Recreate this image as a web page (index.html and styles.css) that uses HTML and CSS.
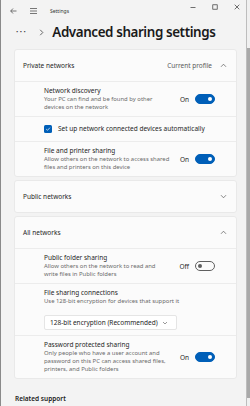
FILE: index.html
```html
<!doctype html>
<html>
	<head>
		<meta charset="utf-8"/>
		<meta name="viewport" content="width=device-width, initial-scale=1" />
		<title>Settings</title>
		<link rel="stylesheet" href="styles.css">
	</head>
	<body>
		<div class="window">
			<div class="main">
				<div class="titlebar">
					<svg class="tb-icon back" width="7" height="6" viewBox="0 0 7 6"><path d="M3 0.5 L0.7 3 L3 5.5 M0.7 3 H6.5" fill="none" stroke="#555" stroke-width="0.8"/></svg>
					<svg class="tb-icon menu" width="7" height="6" viewBox="0 0 7 6"><path d="M0 0.5 H7 M0 3 H7 M0 5.5 H7" fill="none" stroke="#555" stroke-width="0.8"/></svg>
					<span class="app-name">Settings</span>
					<div class="caption">
						<svg width="6" height="6" viewBox="0 0 6 6"><path d="M0.5 3.5 H5.5" stroke="#333" stroke-width="0.7"/></svg>
						<svg width="6" height="6" viewBox="0 0 6 6"><rect x="0.8" y="0.8" width="4.4" height="4.4" fill="none" stroke="#333" stroke-width="0.7"/></svg>
						<svg width="6" height="6" viewBox="0 0 6 6"><path d="M0.7 0.7 L5.3 5.3 M5.3 0.7 L0.7 5.3" stroke="#333" stroke-width="0.7"/></svg>
					</div>
				</div>

				<div class="crumb">
					<span class="dots">&bull;&bull;&bull;</span>
					<svg class="crumb-sep" width="5" height="7" viewBox="0 0 5 7"><path d="M1.2 0.8 L3.8 3.5 L1.2 6.2" fill="none" stroke="#444" stroke-width="0.8"/></svg>
					<h1>Advanced sharing settings</h1>
				</div>

				<div class="content">
					<div class="card">
						<div class="card-head">
							<span>Private networks</span>
							<span class="head-right">Current profile
								<svg class="chev" width="7" height="5" viewBox="0 0 7 5"><path d="M1 3.8 L3.5 1.2 L6 3.8" fill="none" stroke="#555" stroke-width="0.7"/></svg>
							</span>
						</div>
						<div class="row">
							<div class="row-text">
								<div class="row-title">Network discovery</div>
								<div class="row-desc">Your PC can find and be found by other devices on the network</div>
							</div>
							<div class="row-ctrl">On <span class="toggle on"></span></div>
						</div>
						<div class="row check-row">
							<span class="checkbox">
								<svg width="6" height="6" viewBox="0 0 6 6"><path d="M1.2 3.1 L2.5 4.3 L4.9 1.7" fill="none" stroke="#fff" stroke-width="0.7"/></svg>
							</span>
							<span class="row-title">Set up network connected devices automatically</span>
						</div>
						<div class="row">
							<div class="row-text">
								<div class="row-title">File and printer sharing</div>
								<div class="row-desc">Allow others on the network to access shared files and printers on this device</div>
							</div>
							<div class="row-ctrl">On <span class="toggle on"></span></div>
						</div>
					</div>

					<div class="card">
						<div class="card-head">
							<span>Public networks</span>
							<svg class="chev" width="7" height="5" viewBox="0 0 7 5"><path d="M1 1.2 L3.5 3.8 L6 1.2" fill="none" stroke="#555" stroke-width="0.7"/></svg>
						</div>
					</div>

					<div class="card">
						<div class="card-head">
							<span>All networks</span>
							<svg class="chev" width="7" height="5" viewBox="0 0 7 5"><path d="M1 3.8 L3.5 1.2 L6 3.8" fill="none" stroke="#555" stroke-width="0.7"/></svg>
						</div>
						<div class="row">
							<div class="row-text">
								<div class="row-title">Public folder sharing</div>
								<div class="row-desc">Allow others on the network to read and write files in Public folders</div>
							</div>
							<div class="row-ctrl">Off <span class="toggle"></span></div>
						</div>
						<div class="row col-row">
							<div class="row-title">File sharing connections</div>
							<div class="row-desc">Use 128-bit encryption for devices that support it</div>
							<div class="dropdown">
								<span>128-bit encryption (Recommended)</span>
								<svg width="6" height="4" viewBox="0 0 6 4"><path d="M1 1 L3 3 L5 1" fill="none" stroke="#555" stroke-width="0.6"/></svg>
							</div>
						</div>
						<div class="row">
							<div class="row-text">
								<div class="row-title">Password protected sharing</div>
								<div class="row-desc">Only people who have a user account and password on this PC can access shared files, printers, and Public folders</div>
							</div>
							<div class="row-ctrl">On <span class="toggle on"></span></div>
						</div>
					</div>

					<h2 class="related">Related support</h2>
				</div>
			</div>
			<div class="scrollbar"><div class="thumb"></div></div>
		</div>
	</body>
</html>
```

FILE: styles.css
```css
body {
	margin: 0;
	background: #f3f3f3;
	font-family: "Noto Sans", "Open Sans", sans-serif;
	color: #1b1b1b;
}

.window {
	display: flex;
	height: 406px;
	overflow: hidden;
	border-left: 1px solid #8a8a8a;
	box-sizing: border-box;
}

.main {
	flex: 1;
	min-width: 0;
}

.titlebar {
	display: flex;
	align-items: center;
	height: 22px;
	padding-left: 9px;
}

.tb-icon {
	flex: none;
}

.menu {
	margin-left: 13px;
}

.app-name {
	margin-left: 13px;
	font-size: 5px;
	color: #333;
}

.caption {
	margin-left: auto;
	display: flex;
	gap: 16px;
	align-self: flex-start;
	padding-top: 4px;
	padding-right: 6px;
}

.crumb {
	display: flex;
	align-items: center;
	height: 20px;
	padding-left: 15px;
}

.dots {
	font-size: 6px;
	letter-spacing: 1.5px;
	color: #444;
}

.crumb-sep {
	margin-left: 12px;
}

h1 {
	margin: 0 0 0 8px;
	font-size: 13.4px;
	font-weight: 600;
	letter-spacing: -0.4px;
	color: #1a1a1a;
}

.content {
	padding: 7px 9px 0 13px;
	display: flex;
	flex-direction: column;
	gap: 3px;
}

.card {
	background: #fbfbfb;
	border: 1px solid #e9e9e9;
	border-radius: 3px;
}

.card-head {
	display: flex;
	align-items: center;
	justify-content: space-between;
	height: 31px;
	padding: 0 9px 0 8px;
	font-size: 6.5px;
	color: #262626;
}

.head-right {
	display: flex;
	align-items: center;
	gap: 8px;
	color: #5a5a5a;
}

.row {
	display: flex;
	align-items: center;
	border-top: 1px solid #ececec;
	padding: 5px 21px 5px 29px;
	min-height: 24px;
}

.row-text {
	flex: none;
	width: 126px;
}

.row-title {
	font-size: 6.5px;
	line-height: 8px;
	color: #262626;
}

.row-desc {
	font-size: 5.9px;
	line-height: 8px;
	color: #6a6a6a;
}

.row-ctrl {
	margin-left: auto;
	display: flex;
	align-items: center;
	gap: 6px;
	font-size: 6.5px;
	color: #262626;
}

.toggle {
	display: inline-block;
	width: 20px;
	height: 10px;
	box-sizing: border-box;
	border-radius: 5px;
	border: 1px solid #5f5f5f;
	position: relative;
}

.toggle::after {
	content: "";
	position: absolute;
	top: 2px;
	left: 2px;
	width: 4px;
	height: 4px;
	border-radius: 50%;
	background: #5f5f5f;
}

.toggle.on {
	background: #005fb8;
	border-color: #005fb8;
}

.toggle.on::after {
	left: auto;
	right: 2px;
	background: #fff;
}

.check-row {
	min-height: 14px;
	gap: 6px;
}

.checkbox {
	display: flex;
	align-items: center;
	justify-content: center;
	width: 8px;
	height: 8px;
	border-radius: 1.5px;
	background: #005fb8;
}

.col-row {
	flex-direction: column;
	align-items: stretch;
}

.dropdown {
	display: flex;
	align-items: center;
	justify-content: space-between;
	width: 133px;
	height: 15px;
	box-sizing: border-box;
	margin-top: 10px;
	padding: 0 8px 0 5px;
	background: #fff;
	border: 1px solid #e5e5e5;
	border-radius: 2px;
	font-size: 6.5px;
	color: #262626;
}

.related {
	margin: 12px 0 0 1px;
	font-size: 6.5px;
	line-height: 9px;
	font-weight: 600;
	color: #1b1b1b;
}

.scrollbar {
	width: 3px;
	background: #f0f0f0;
	border-left: 1px solid #bdbdbd;
}

.thumb {
	margin-top: 48px;
	height: 350px;
	background: #a9a9a9;
}
```
